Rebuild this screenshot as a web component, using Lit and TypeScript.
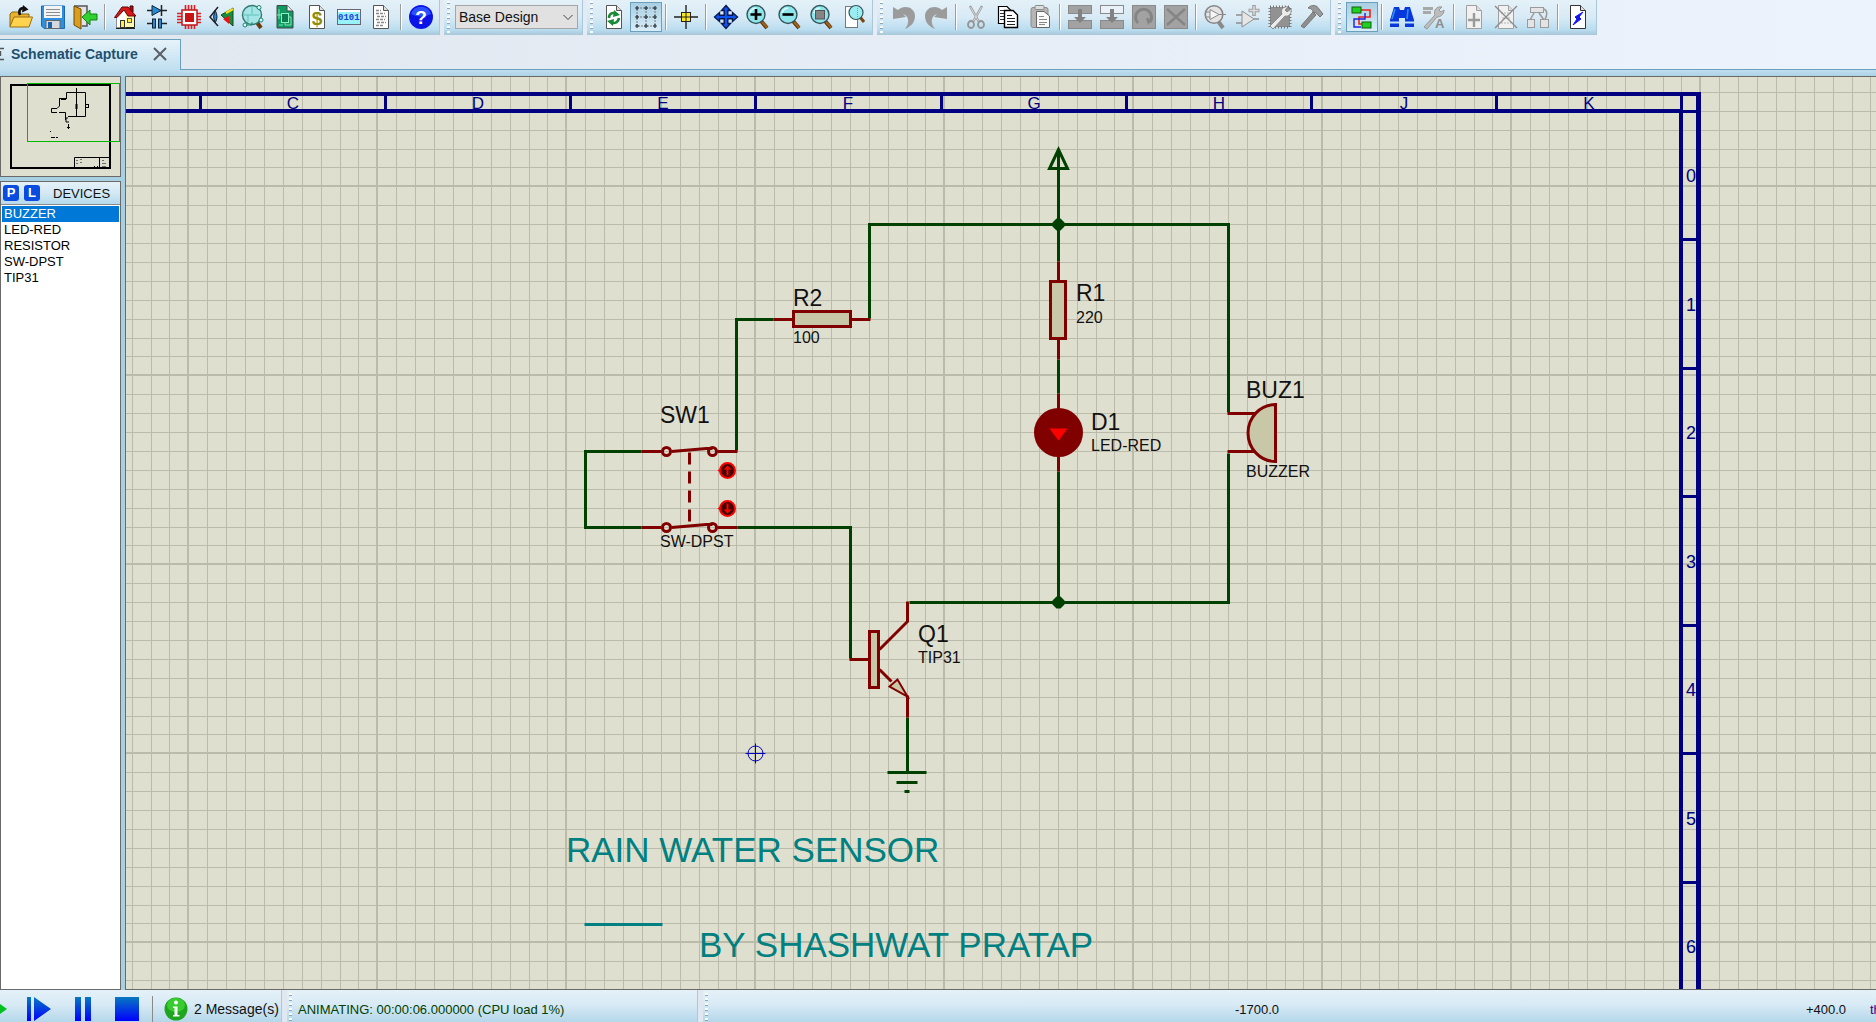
import { LitElement, html, svg, css, nothing, SVGTemplateResult, TemplateResult } from "lit";
import { customElement, property, state } from "lit/decorators.js";
import { classMap } from "lit/directives/class-map.js";

type Icon = SVGTemplateResult;

const lens = (inner: Icon) => svg`
  <path d="M15 16 L21 23" stroke="#5a3208" stroke-width="4"/>
  <path d="M16 17 L21 22.5" stroke="#a8641c" stroke-width="2"/>
  <circle cx="10" cy="9.5" r="9" fill="#8fe6ea" stroke="#35545c" stroke-width="1.4"/>
  <path d="M4 8 A7 7 0 0 1 10 3" fill="none" stroke="#e2ffff" stroke-width="1.4"/>
  ${inner}`;

const page = (inner: Icon, fill = "#fff", stroke = "#555") => svg`
  <path d="M4.5 0.5 H14.5 L19.5 5.5 V23.5 H4.5 Z" fill=${fill} stroke=${stroke}/>
  <path d="M14.5 0.5 V5.5 H19.5" fill="#ddd" stroke=${stroke}/>
  ${inner}`;

const grayBlock = (inner: Icon) => svg`
  <rect x="0.5" y="0.5" width="23" height="23" fill="#a2a2a2" stroke="#8a8a8a"/>${inner}`;

const ICONS: Record<string, Icon> = {
  open: svg`
    <path d="M1 21 V9 L3 7 H9 L11 9 H20 V13" fill="#e9b22c" stroke="#8d6410"/>
    <path d="M0.8 22 L5 12 H23.5 L20 22 Z" fill="#ffd34e" stroke="#9a6d12" stroke-linejoin="round"/>
    <path d="M11 10 C9 5 12 2 16 3.500" fill="none" stroke="#111" stroke-width="2.6"/>
    <path d="M14 0 L19.500 4.500 L13 7.500 Z" fill="#111"/>`,
  save: svg`
    <path d="M0.5 1 H23.5 V23.500 H3 L0.500 21 Z" fill="#2c8fe0" stroke="#1a68b4"/>
    <rect x="3" y="1" width="18" height="12" fill="#f4f4f4"/>
    <path d="M5 4.500 H19 M5 7.500 H19 M5 10.500 H19" stroke="#8d8d8d"/>
    <rect x="5" y="15.500" width="14" height="8" fill="#d5d8dc" stroke="#666"/>
    <rect x="7" y="17" width="4" height="6" fill="#1c63ae"/>`,
  exit: svg`
    <path d="M1 1 H14 V21 H9" fill="#e0e3e6" stroke="#555" stroke-width="1.500"/>
    <path d="M1 1 L8 4 V24 L1 20 Z" fill="#dc9c1c" stroke="#6d4a08"/>
    <path d="M24 9 V15 H17 V20 L9 12 L17 5 V9 Z" fill="#2fd02f" stroke="#128312"/>`,
  home: svg`
    <path d="M3.500 11 V22.500 H21.500 V10 L15 3 Z" fill="#fff7b0" stroke="#222"/>
    <path d="M3.500 12 V22.500 H12.500 V4 Z" fill="#fff"/>
    <path d="M17 1 H20 V7 H17 Z" fill="#b01010" stroke="#400"/>
    <path d="M1.500 12.500 L9 2 H15 L23 11 H15 L11 5 L4 12.500 Z" fill="#d81818" stroke="#5c0808"/>
    <rect x="7.500" y="15.500" width="4" height="7" fill="#ffef3e" stroke="#333"/>
    <rect x="14.500" y="13.500" width="4" height="4" fill="#ffef3e" stroke="#555"/>
    <path d="M3 23.500 H22" stroke="#222"/>`,
  diode: svg`
    <path d="M2 5.500 H22" stroke="#222" stroke-width="1.500"/>
    <path d="M7 0.500 V10.500 L16 5.500 Z" fill="#258ad6" stroke="#123"/>
    <path d="M16.500 0 V11" stroke="#222" stroke-width="1.500"/>
    <path d="M2 18.500 H7 M17 18.500 H22" stroke="#222" stroke-width="1.500"/>
    <rect x="7.500" y="14" width="3" height="9" fill="#258ad6" stroke="#123"/>
    <rect x="13.500" y="14" width="3" height="9" fill="#258ad6" stroke="#123"/>`,
  chip: svg`
    <path d="M8.500 0 V24 M11.500 0 V24 M14.500 0 V24 M17.500 0 V24 M0 8.500 H24 M0 11.500 H24 M0 14.500 H24 M0 17.500 H24" stroke="#e02020" stroke-width="1.600"/>
    <rect x="5" y="5" width="15" height="15" fill="#fff" stroke="#c01818" stroke-width="1.500"/>
    <rect x="8" y="8" width="9" height="9" fill="#c81414"/>`,
  view: svg`
    <path d="M9 2 L1 12 L9 21" fill="none" stroke="#222" stroke-width="1.500"/>
    <path d="M6 5 Q10 12 6 18 Q3 12 6 5 Z" fill="#2a88d8" stroke="#123"/>
    <path d="M12 10 L24 3 V21 Z" fill="#188c3c" stroke="#0a4d20"/>
    <path d="M14 14 L20 11 V19 Z" fill="#f01010"/>
    <path d="M17 8 L24 4" stroke="#f5e020" stroke-width="2.500"/>`,
  explore: svg`
    <path d="M15 16 L20 23" stroke="#6b3d0c" stroke-width="4"/>
    <circle cx="11" cy="10" r="9.500" fill="#a4e6e8" stroke="#2f7a70" stroke-width="1.400"/>
    <path d="M3 10 H18 M11 2 V9 M7 10 V17" stroke="#62bdb4" fill="none"/>
    <circle cx="18" cy="2.500" r="2" fill="#dff" stroke="#17856a"/>
    <circle cx="4" cy="20" r="2" fill="#dff" stroke="#17856a"/>
    <circle cx="20" cy="15" r="2" fill="#dff" stroke="#17856a"/>
    <path d="M5 20 H11 V17" stroke="#17856a" fill="none"/>`,
  pcb: svg`
    <path d="M4 0.500 H14 L20 6 V23 H4 Z" fill="#0f9a63" stroke="#444"/>
    <path d="M14 0.500 V6 H20" fill="#eee" stroke="#444"/>
    <rect x="8.500" y="8.500" width="7" height="9" fill="#0c7d50" stroke="#8ff0c0"/>
    <path d="M4 10 H8 M15 12 H18 V20 H12 V17 M6 4 V14 M6 20 H10" stroke="#7be8b4" fill="none"/>`,
  bom: page(svg`<text x="12" y="20" text-anchor="middle" font-size="19" font-weight="700" fill="#8c8c10">$</text>`),
  sim: svg`
    <rect x="0.500" y="4.500" width="23" height="15" fill="#98f2fa" stroke="#667"/>
    <rect x="1" y="5" width="22" height="2" fill="#fff"/>
    <text x="1" y="15" font-size="9" font-weight="700" fill="#2040e0" font-family="Liberation Mono, monospace">0101</text>`,
  doc: page(svg`<path d="M7 5.500 H12 M7 8.500 H16 M8 11.500 H17 M7 14.500 H16 M8 17.500 H17 M7 20.500 H15" stroke="#8a8a8a" stroke-width="1.400" stroke-dasharray="3 1"/>`),
  help: svg`
    <circle cx="12" cy="12" r="12" fill="#0a14e6"/>
    <path d="M2 9 A10.500 10.500 0 0 1 22 9 Q12 14 2 9" fill="#2a50ff"/>
    <text x="12" y="19" text-anchor="middle" font-size="19" font-weight="700" fill="#fff">?</text>`,
  refresh: page(svg`
    <path d="M7 13 C7 8 11 7 14 9 M17 13 C16 18 12 19 9 17" fill="none" stroke="#188a38" stroke-width="2.600"/>
    <path d="M12 5 L18 10 L11 12 Z M12 14 L5 16 L11 21 Z" fill="#188a38"/>`),
  grid: svg`
    <path d="M3 3 H21 V21 H3 Z M12 3 V21 M3 12 H21" fill="none" stroke="#707b84" stroke-dasharray="2 1"/>
    ${[3, 12, 21].map((x) => [3, 12, 21].map((y) => svg`<path d="M${x - 2} ${y} h4 M${x} ${y - 2} v4" stroke="#2c3338" stroke-width="1.200"/>`))}`,
  origin: svg`
    <path d="M0 12 H24 M12 0 V24" stroke="#222" stroke-width="1.400"/>
    <rect x="7.500" y="7.500" width="9" height="9" fill="#ffe81c" stroke="#222"/>
    <path d="M7 12 H17 M12 7 V17" stroke="#222"/>`,
  pan: svg`
    <path d="M12 0.500 L16.500 5.500 H13.800 V10.200 H18.500 V7.500 L23.500 12 L18.500 16.500 V13.800 H13.800 V18.500 H16.500 L12 23.500 L7.500 18.500 H10.200 V13.800 H5.500 V16.500 L0.500 12 L5.500 7.500 V10.200 H10.200 V5.500 H7.500 Z" fill="#1054f0" stroke="#06184e" stroke-width="1.400"/>`,
  zoomIn: lens(svg`<path d="M4.500 9.500 H15.500 M10 4 V15" stroke="#000" stroke-width="2.600"/>`),
  zoomOut: lens(svg`<path d="M4.500 9.500 H15.500" stroke="#000" stroke-width="2.600"/>`),
  zoomAll: lens(svg`<rect x="5.500" y="5.500" width="9" height="8.500" fill="#858585" stroke="#555"/>`),
  zoomArea: svg`
    <rect x="3.500" y="1.500" width="12" height="21" fill="#fff" stroke="#000" stroke-dasharray="1 1"/>
    <path d="M18 12 L22 17" stroke="#7a4510" stroke-width="3"/>
    <circle cx="14" cy="7.500" r="7" fill="#9aeef2" stroke="#35545c" stroke-width="1.200"/>
    <path d="M15.500 3 V13" stroke="#5ab" stroke-dasharray="1 1"/>`,
  undo: svg`<path d="M1 2 L6 5 C12 -1 23 2 23 11 C23 18 18 22 13 24 C18 18 17 11 11 9 L14 12 L1 14 Z" fill="#9b9b9b"/>`,
  redo: svg`<path d="M23 2 L18 5 C12 -1 1 2 1 11 C1 18 6 22 11 24 C6 18 7 11 13 9 L10 12 L23 14 Z" fill="#9b9b9b"/>`,
  cut: svg`
    <path d="M6 1 L15 17 M18 1 L9 17" stroke="#9a9a9a" stroke-width="2.400"/>
    <path d="M6.500 2 L15 17 M17.500 2 L9 17" stroke="#d8d8d8"/>
    <ellipse cx="7" cy="19.500" rx="3" ry="3.500" fill="none" stroke="#949494" stroke-width="1.800"/>
    <ellipse cx="17" cy="19.500" rx="3" ry="3.500" fill="none" stroke="#949494" stroke-width="1.800"/>`,
  copy: svg`
    <path d="M2.500 1.500 H11 L14.500 5 V18.500 H2.500 Z" fill="#fff" stroke="#000" stroke-width="1.200"/>
    <path d="M4 5.500 H10 M4 8.500 H12 M4 11.500 H9 M4 14.500 H9" stroke="#234" />
    <path d="M8.500 5.500 H17 L21.500 10 V22.500 H8.500 Z" fill="#fff" stroke="#000" stroke-width="1.400"/>
    <path d="M11 10.500 H16 M11 13.500 H19 M11 16.500 H19 M11 19.500 H19" stroke="#222" stroke-width="1.200"/>`,
  paste: svg`
    <rect x="3" y="2.500" width="17" height="20" rx="2" fill="#b5b5b5" stroke="#8c8c8c"/>
    <rect x="7" y="0.500" width="9" height="4" rx="1" fill="#ddd" stroke="#8c8c8c"/>
    <path d="M8.500 6.500 H16 L21.500 11 V22.500 H8.500 Z" fill="#fafafa" stroke="#666"/>
    <path d="M11 11.500 H16 M11 14.500 H19 M11 17.500 H19 M11 19.500 H17" stroke="#888"/>`,
  blockCopy: svg`
    <rect x="0.500" y="0.500" width="23" height="8" fill="#a2a2a2" stroke="#8a8a8a"/>
    <rect x="0.500" y="15.500" width="23" height="8" fill="#a2a2a2" stroke="#8a8a8a"/>
    <path d="M10 4 H14 V12 H18 L12 18 L6 12 H10 Z" fill="#828282"/>`,
  blockMove: svg`
    <rect x="0.500" y="0.500" width="23" height="8" fill="#e9f2f8" stroke="#8a8a8a"/>
    <rect x="0.500" y="15.500" width="23" height="8" fill="#a2a2a2" stroke="#8a8a8a"/>
    <path d="M10 4 H14 V12 H18 L12 18 L6 12 H10 Z" fill="#828282"/>`,
  blockRotate: grayBlock(svg`<path d="M6 18 A8 8 0 1 1 18 17" fill="none" stroke="#858585" stroke-width="3"/><path d="M14 13 L21 14 L16 20 Z" fill="#858585"/>`),
  blockDelete: grayBlock(svg`<path d="M3 4 L21 20 M21 4 L3 20" stroke="#858585" stroke-width="2.400"/>`),
  pick: svg`
    <path d="M14 16 L19 23" stroke="#8a8a8a" stroke-width="4"/>
    <circle cx="10" cy="9.500" r="8.800" fill="#e4e4e4" stroke="#858585" stroke-width="1.600"/>
    <path d="M6 4.500 V14.500 L15 9.500 Z" fill="#f6f6f6" stroke="#8a8a8a"/>
    <path d="M1 7 H6 M1 12 H6 M15 9.500 H22" stroke="#8a8a8a"/>`,
  make: svg`
    <path d="M6 6 V22 L18 14 Z" fill="#e6e6e6" stroke="#8f8f8f"/>
    <path d="M0 10 H6 M0 18 H6 M18 14 H23" stroke="#8f8f8f" stroke-width="1.400"/>
    <path d="M18 0 V11 M12.500 5.500 H23.500" stroke="#a0a0a0" stroke-width="3.600"/>
    <path d="M18 1 V10 M13.500 5.500 H22.500" stroke="#dcdcdc" stroke-width="1.400"/>`,
  pack: svg`
    <rect x="2" y="2" width="20" height="20" fill="#8c8c8c" stroke="#777" stroke-width="3" stroke-dasharray="1 2"/>
    <rect x="3" y="3" width="18" height="18" fill="#929292"/>
    <path d="M2 21 L14 9 C12 4 16 1 20 2 L17 5 L19 7 L23 4 C24 9 20 12 17 11 L5 24 Z" fill="#ececec" stroke="#8a8a8a"/>`,
  hammer: svg`
    <path d="M1 21 L13 7 L16 10 L4 23 Z" fill="#8e8e8e" stroke="#777"/>
    <path d="M8 3 C12 -1 17 0 19 4 L23 9 L20 12 L16 8 L13 7 C13 5 11 3 8 3 Z" fill="#999" stroke="#777"/>`,
  wire: svg`
    <path d="M10 5 H20 V12 H9 V19 H13" fill="none" stroke="#f02020" stroke-width="1.600"/>
    <path d="M15 8 V14 H4 V22 H11" fill="none" stroke="#2020e0" stroke-width="1.400"/>
    <rect x="2" y="2" width="9" height="6" fill="#20d020" stroke="#0b600b"/>
    <rect x="12" y="17" width="9" height="6" fill="#20d020" stroke="#0b600b"/>`,
  find: svg`
    <path d="M4 2 H9 L10 5 H14 L15 2 H20 L24 15 V22 H15 V13 H9 V22 H0 V15 Z" fill="#0838dc"/>
    <path d="M0 17.500 H9 M15 17.500 H24" stroke="#bfe4f4" stroke-width="2"/>
    <path d="M5 4 L2 14 M18 4 L17 14" stroke="#2890f0" stroke-width="1.600"/>`,
  props: svg`
    <path d="M1 3.500 H11 M1 7.500 H9" stroke="#a8a8a8" stroke-width="3"/>
    <path d="M2 22 L13 10 C11 5 15 1 20 2 L17 5 L19 7 L22 5 C22 10 18 12 15 12 L5 24 Z" fill="#bdbdbd" stroke="#999"/>
    <text x="13" y="23" font-size="13" font-weight="700" fill="#8c8c8c">A</text>`,
  newSheet: page(svg`<path d="M12 8 V22 M6 15 H18" stroke="#9a9a9a" stroke-width="2.400"/>`, "#f1f1f1", "#a0a0a0"),
  delSheet: page(svg`<path d="M7 8 H17 M8 13 H16 M7 18 H17" stroke="#b5b5b5" stroke-dasharray="2 1"/><path d="M1 1 L23 23 M23 1 L1 23" stroke="#8c8c8c" stroke-width="1.400"/>`, "#f1f1f1", "#a0a0a0"),
  tree: svg`
    <path d="M8 8 L4 15 M13 8 L18 15 M18 4 C22 6 21 11 19 14" fill="none" stroke="#999" stroke-width="1.500"/>
    <rect x="4.500" y="2.500" width="13" height="5" fill="#e4e4e4" stroke="#9a9a9a"/>
    <rect x="1.500" y="14.500" width="7" height="8" fill="#e4e4e4" stroke="#9a9a9a"/>
    <rect x="14.500" y="14.500" width="8" height="8" fill="#e4e4e4" stroke="#9a9a9a"/>`,
  erc: page(svg`<path d="M17 7 L9 12 L11 14 L7 20 L15 14 L13 12 Z" fill="#1414f0" stroke="#1414f0"/>`, "#fff", "#333"),
};

interface Tool { icon: string; label: string; pressed?: boolean }
const t = (icon: string, label: string, pressed = false): Tool => ({ icon, label, pressed });

const FILE_TOOLS: Tool[][] = [
  [t("open", "Open Project"), t("save", "Save Project"), t("exit", "Close Project")],
  [t("home", "Home Page"), t("diode", "Schematic Capture"), t("chip", "PCB Layout"), t("view", "3D Visualizer"), t("explore", "Gerber Viewer"), t("pcb", "Design Explorer"), t("bom", "Bill of Materials"), t("sim", "Source Code"), t("doc", "Project Notes")],
  [t("help", "Help")],
];
const VIEW_TOOLS: Tool[][] = [
  [t("refresh", "Redraw Display"), t("grid", "Toggle Grid", true)],
  [t("origin", "Toggle False Origin")],
  [t("pan", "Center At Cursor"), t("zoomIn", "Zoom In"), t("zoomOut", "Zoom Out"), t("zoomAll", "Zoom To View Entire Sheet"), t("zoomArea", "Zoom To Area")],
];
const EDIT_TOOLS: Tool[][] = [
  [t("undo", "Undo"), t("redo", "Redo")],
  [t("cut", "Cut"), t("copy", "Copy"), t("paste", "Paste")],
  [t("blockCopy", "Block Copy"), t("blockMove", "Block Move"), t("blockRotate", "Block Rotate"), t("blockDelete", "Block Delete")],
  [t("pick", "Pick Parts"), t("make", "Make Device"), t("pack", "Packaging Tool"), t("hammer", "Decompose")],
];
const DESIGN_TOOLS: Tool[][] = [
  [t("wire", "Wire Autorouter", true)],
  [t("find", "Search and Tag"), t("props", "Property Assignment Tool")],
  [t("newSheet", "New Sheet"), t("delSheet", "Remove Sheet"), t("tree", "Exit To Parent Sheet")],
  [t("erc", "Electrical Rules Check")],
];

@customElement("tool-strip")
export class ToolStrip extends LitElement {
  @property({ attribute: false }) groups: Tool[][] = [];
  @property({ type: Boolean }) grip = false;

  static styles = css`
    :host { display: flex; }
    .strip {
      display: flex; align-items: center; box-sizing: border-box; height: 35px;
      padding: 0 2px 1px 5px; border-right: 1px solid #a9c8dc;
      background: linear-gradient(#e4f1f8, #d8eaf5 50%, #b9ddf0 85%, #a8c6d8);
    }
    .strip.gripped { padding-left: 3px; }
    .grip { width: 3px; height: 32px; margin-right: 5px; background: repeating-linear-gradient(#f8fcff 0 2px, #8fa7b6 2px 3px, transparent 3px 5px); }
    .sep { width: 1px; height: 26px; margin: 0 3px; background: #9c9c9c; border-right: 1px solid #fff; }
    .tool { width: 32px; height: 30px; padding: 0; border: 1px solid transparent; background: none; display: grid; place-items: center; box-sizing: border-box; }
    .tool.pressed { border-color: #6a9fbe; background: linear-gradient(#a9cfe2, #d8edf7); }
    .icon { display: block; overflow: visible; font-family: "Liberation Sans", Arial, sans-serif; }
  `;

  render() {
    return html`<div class=${classMap({ strip: true, gripped: this.grip })} role="toolbar">
      ${this.grip ? html`<span class="grip"></span>` : nothing}
      ${this.groups.map((g, i) => html`
        ${i ? html`<span class="sep"></span>` : nothing}
        ${g.map((tool) => html`<button class=${classMap({ tool: true, pressed: !!tool.pressed })} aria-label=${tool.label}>
          <svg class="icon" width="24" height="24" viewBox="0 0 24 24">${ICONS[tool.icon]}</svg>
        </button>`)}`)}
    </div>`;
  }
}

const COLUMN_TICKS = [199, 384, 569, 754, 940, 1125, 1310, 1495];
const COLUMN_NAMES = ["C", "D", "E", "F", "G", "H", "J", "K"];
const ROW_TICKS = [238, 367, 495, 624, 752, 881];
const ROW_BASELINES = [182, 311, 439, 568, 696, 825, 953];
const GRID_STEPS = [20, 39, 58, 77, 96, 115, 134, 153, 171];

interface Label { x: number; y: number; text: string; kind: string }
const LABELS: Label[] = [
  { x: 793, y: 306, text: "R2", kind: "ref" },
  { x: 793, y: 343, text: "100", kind: "val" },
  { x: 660, y: 423, text: "SW1", kind: "ref" },
  { x: 660, y: 547, text: "SW-DPST", kind: "val" },
  { x: 1076, y: 301, text: "R1", kind: "ref" },
  { x: 1076, y: 323, text: "220", kind: "val" },
  { x: 1091, y: 430, text: "D1", kind: "ref" },
  { x: 1091, y: 451, text: "LED-RED", kind: "val" },
  { x: 1246, y: 398, text: "BUZ1", kind: "ref" },
  { x: 1246, y: 477, text: "BUZZER", kind: "val" },
  { x: 918, y: 642, text: "Q1", kind: "ref" },
  { x: 918, y: 663, text: "TIP31", kind: "val" },
  { x: 566, y: 862, text: "RAIN WATER SENSOR", kind: "title" },
  { x: 699, y: 957, text: "BY SHASHWAT PRATAP", kind: "title" },
];

@customElement("schematic-sheet")
export class SchematicSheet extends LitElement {
  static styles = css`
    :host { display: flex; flex: 1; min-width: 0; min-height: 0; background: #dfdfcf; }
    .sheet { flex: 1; display: block; width: 100%; height: 100%; font-family: "Liberation Sans", Arial, sans-serif; }
    .ref { font-size: 23px; fill: #111; }
    .val { font-size: 16px; fill: #111; }
    .title { font-size: 35px; fill: #008080; }
    .column { font-size: 17px; fill: #000080; text-anchor: middle; }
    .row { font-size: 18px; fill: #000080; }
    .border { fill: #000080; }
    .wire { fill: none; stroke: #004000; stroke-width: 3; }
    .part { fill: none; stroke: #800000; stroke-width: 3; }
    .body { fill: #c8c8a8; stroke: #800000; stroke-width: 3; }
    .arrow { fill: #c8c8a8; stroke: #800000; stroke-width: 2; }
    .node { fill: #004000; }
  `;

  private toggle(y: number, dir: number) {
    return svg`
      <path d="M717 ${y} l4 -3 v6 z" fill="#f00"/>
      <circle cx="727" cy=${y} r="7.5" fill="#400000" stroke="#ff0000" stroke-width="2"/>
      <path d="M727 ${y + 5 * dir} V${y - 3 * dir}" stroke="#ff0000" stroke-width="2"/>
      <path d="M723 ${y - dir} L727 ${y - 5 * dir} L731 ${y - dir} Z" fill="#ff0000"/>`;
  }

  private pole(y: number) {
    return svg`
      <path class="part" d="M641 ${y} H661 M717 ${y} H737 M671 ${y} L706 ${y - 3} H712"/>
      <circle class="part" cx="666" cy=${y} r="4"/>
      <circle class="part" cx="712" cy=${y} r="4"/>`;
  }

  render() {
    return html`<svg class="sheet" role="img" aria-label="Rain water sensor schematic">
      <defs>
        <pattern id="grid" x="187" y="185" width="189" height="189" patternUnits="userSpaceOnUse">
          <rect width="189" height="2" fill="#bbbbab"/>
          <rect width="2" height="189" fill="#bbbbab"/>
          ${GRID_STEPS.map((p) => svg`<rect x=${p} width="1" height="189" fill="#bbbbab"/><rect y=${p} width="189" height="1" fill="#bbbbab"/>`)}
        </pattern>
      </defs>
      <g transform="translate(-126 -77)">
        <rect x="126" y="77" width="100%" height="100%" fill="url(#grid)"/>
        <g class="border">
          <rect x="126" y="92" width="1575" height="4"/>
          <rect x="126" y="109" width="1556" height="4"/>
          <rect x="1680" y="110" width="16" height="3"/>
          <rect x="1680" y="92" width="3" height="20"/>
          <rect x="1679" y="109" width="4" height="100%"/>
          <rect x="1696" y="92" width="5" height="100%"/>
          ${COLUMN_TICKS.map((x) => svg`<rect x=${x} y="94" width="3" height="17"/>`)}
          ${ROW_TICKS.map((y) => svg`<rect x="1681" y=${y} width="17" height="3"/>`)}
        </g>
        ${COLUMN_NAMES.map((c, i) => svg`<text class="column" x=${COLUMN_TICKS[i] + 94} y="109">${c}</text>`)}
        ${ROW_BASELINES.map((y, i) => svg`<text class="row" x="1686" y=${y}>${i}</text>`)}
      </g>
      <g transform="translate(-125.5 -76.5)">
        <path class="wire" d="M773 319 H736 V450 M869 318 V224 H1228 V412 M1228 453 V602 H909
          M1058 151 V261 M1058 359 V393 M1058 471 V602 M641 451 H585 V527 H641 M737 527 H850 V658
          M907 717 V772 M887 772 H926 M896 782 H917 M904 791 H909"/>
        <path class="wire" stroke-linejoin="miter" d="M1058 149 L1049 168 H1067 Z"/>
        <path class="node" d="M1056 218 h4 l4 4 v4 l-4 4 h-4 l-4 -4 v-4 z M1056 596 h4 l4 4 v4 l-4 4 h-4 l-4 -4 v-4 z"/>
        <path class="part" d="M773 319 H793 M851 319 H870 M1058 261 V281 M1058 339 V359 M1058 393 V410 M1058 456 V471"/>
        <rect class="body" x="793" y="311" width="57" height="15"/>
        <rect class="body" x="1050" y="281" width="15" height="57"/>
        <circle cx="1058" cy="432" r="24.5" fill="#800000"/>
        <path d="M1049 428 H1067 L1058 440 Z" fill="#ff0000"/>
        <path class="part" d="M1227 413 H1255 M1227 451 H1255"/>
        <path class="body" d="M1275 404 A27 28 0 0 0 1275 461 Z"/>
        ${this.pole(451)}
        ${this.pole(527)}
        <path class="part" d="M689 452 V464 M689 471 V483 M689 490 V502 M689 509 V521"/>
        ${this.toggle(470, 1)}
        ${this.toggle(508, -1)}
        <path class="part" d="M849 659 H868 M907 601 V621 L879 649 M879 669 L891 681 M907 695 V717"/>
        <rect class="body" x="869" y="631" width="9" height="56"/>
        <path class="arrow" d="M897 679 L889 686 L907 696 Z"/>
        <path d="M745 753 H765 M755 743 V763" stroke="#0000c0"/>
        <circle cx="755" cy="753" r="7.500" fill="none" stroke="#0000c0"/>
        <path d="M584 924 H662" stroke="#008080" stroke-width="3"/>
      </g>
      <g transform="translate(-126 -77)">
        ${LABELS.map((l) => svg`<text class=${l.kind} x=${l.x} y=${l.y}>${l.text}</text>`)}
      </g>
    </svg>`;
  }
}

const DEVICES = ["BUZZER", "LED-RED", "RESISTOR", "SW-DPST", "TIP31"];

@customElement("device-panel")
export class DevicePanel extends LitElement {
  @state() private selected = "BUZZER";

  static styles = css`
    :host { display: flex; flex-direction: column; gap: 4px; width: 121px; flex: none; font: 13px "Liberation Sans", Arial, sans-serif; }
    .overview { height: 99px; border: 1px solid #6a6a6a; background: #dfdfcf; }
    .thumb { display: block; width: 100%; height: 100%; }
    .devices { flex: 1; display: flex; flex-direction: column; border: 1px solid #6a6a6a; background: #fff; }
    .head { display: flex; align-items: center; height: 23px; padding: 0 2px; gap: 5px; background: linear-gradient(#e4f1f8, #d3e9f5 50%, #b5d9ec); border-bottom: 1px solid #8b8b8b; box-sizing: border-box; }
    .key { width: 16px; height: 16px; padding: 0; border: 0; border-radius: 3px; background: #0a4be0; color: #fff; font: bold 13px/16px "Liberation Sans", Arial, sans-serif; }
    .name { flex: 1; margin: 0; padding-left: 8px; font-size: 13px; font-weight: 400; color: #111; white-space: nowrap; }
    .list { list-style: none; margin: 0; padding: 1px; }
    .item { display: block; width: 100%; height: 16px; padding: 0 2px; border: 0; background: none; text-align: left; font: 13px/16px "Liberation Sans", Arial, sans-serif; color: #000; }
    .item.on { background: #0078d7; color: #fff; }
  `;

  render() {
    return html`
      <div class="overview">
        <svg class="thumb" role="img" aria-label="Sheet overview">
          <rect x="10" y="8" width="99" height="83" fill="none" stroke="#000" stroke-width="2"/>
          <path d="M73.500 91 V80.500 H109 M98.500 80 V91" fill="none" stroke="#000"/>
          <path d="M76 83 V88 M80 82 V88 M102 83 V90 M93 89.500 H97 M104 86 V90" stroke="#000" stroke-dasharray="1 2"/>
          <path d="M75.500 11 V39 M65.500 21 V15.500 H84.500 V39.500 H67 M59 21.500 H66 M58.500 21 V29 L56 31.500 H50.500 V35.500 H56 M58 35.500 H64.500 V43 M67 41 H65 V45 H68 M67.500 47 V52 M66 50.500 H69" fill="none" stroke="#000"/>
          <path d="M60 22 H65 M75.500 27 V32" stroke="#000" stroke-width="2"/>
          <rect x="84.500" y="27.500" width="3" height="3" fill="#dfdfcf" stroke="#000"/>
          <path d="M49 54.500 H50 M50 60.500 H54 M55 60.500 H57" stroke="#000"/>
          <rect x="26.500" y="6.500" width="92" height="58" fill="none" stroke="#00b800"/>
        </svg>
      </div>
      <section class="devices">
        <header class="head">
          <button class="key" aria-label="Pick devices">P</button>
          <button class="key" aria-label="Manage libraries">L</button>
          <h2 class="name">DEVICES</h2>
        </header>
        <ul class="list">
          ${DEVICES.map((d) => html`<li><button class=${classMap({ item: true, on: d === this.selected })} @click=${() => (this.selected = d)}>${d}</button></li>`)}
        </ul>
      </section>`;
  }
}

@customElement("app-root")
export class AppRoot extends LitElement {
  static styles = css`
    :host { display: block; font: 13px "Liberation Sans", Arial, sans-serif; color: #111; }
    .app { display: flex; flex-direction: column; height: 100vh; overflow: hidden; background: linear-gradient(90deg, #e1e7ef, #edf3fc); }
    .tools { display: flex; flex: none; gap: 4px; height: 35px; }
    .variant { display: flex; align-items: center; box-sizing: border-box; width: 139px; height: 35px; padding: 0 0 1px 3px; border-right: 1px solid #a9c8dc; background: linear-gradient(#e4f1f8, #d8eaf5 50%, #b9ddf0 85%, #a8c6d8); }
    .grip { width: 3px; height: 32px; margin-right: 5px; background: repeating-linear-gradient(#f8fcff 0 2px, #8fa7b6 2px 3px, transparent 3px 5px); }
    .picker { position: relative; display: flex; }
    .select { appearance: none; box-sizing: border-box; width: 123px; height: 24px; padding: 0 3px; border: 1px solid #a6a6a6; border-radius: 0; background: #e1e1e1; font: 14px "Liberation Sans", Arial, sans-serif; color: #111; }
    .chevron { position: absolute; right: 5px; top: 9px; pointer-events: none; }
    .tabs { display: flex; flex: none; align-items: flex-end; height: 34px; border-bottom: 1px solid #6a9fbe; }
    .tab { display: flex; align-items: center; box-sizing: border-box; width: 181px; height: 31px; margin-bottom: -1px; padding-bottom: 2px; border: 1px solid #6a9fbe; border-width: 1px 1px 0 0; background: linear-gradient(#e6f3fa, #c0dff0); color: #1f4f70; font-weight: bold; font-size: 14px; }
    .tab-icon { flex: none; margin-right: 7px; }
    .tab-name { flex: 1; white-space: nowrap; }
    .close { width: 16px; height: 16px; margin-right: 12px; padding: 0; border: 0; background: none; display: grid; place-items: center; }
    .work { flex: 1; display: flex; gap: 4px; padding-top: 6px; background: linear-gradient(#c0dff0, #a9cfe2 7px); min-height: 0; }
    .pane { flex: 1; display: flex; min-width: 0; border: 1px solid #6a6a6a; border-right: 0; }
    .status { display: flex; flex: none; align-items: stretch; gap: 5px; height: 32px; background: #dfe8f0; }
    .cell { display: flex; align-items: center; box-sizing: border-box; padding-top: 6px; border-right: 1px solid #a9c8dc; background: linear-gradient(#e4f1f8, #d8eaf5 45%, #b4d7ea); white-space: nowrap; }
    .transport { width: 282px; font-size: 14px; }
    .run { width: 411px; color: #004000; }
    .coords { flex: 1; border-right: 0; }
    .cell .grip { height: 28px; margin: -4px 6px 0 2px; }
    .ctl { height: 24px; padding: 0; border: 0; background: none; display: block; }
    .play { width: 27px; }
    .step { width: 48px; }
    .pause { width: 40px; }
    .stop { width: 37px; }
    .bar { width: 1px; height: 26px; margin-right: 11px; background: #8a8a8a; }
    .info { flex: none; margin-right: 6px; }
    .glyph { display: block; }
    .x { flex: 1; text-align: right; }
    .y { width: 567px; text-align: right; }
    .unit { width: 30px; padding-left: 24px; box-sizing: border-box; overflow: hidden; color: #400080; }
  `;

  private statusBar(): TemplateResult {
    return html`<footer class="status">
      <div class="cell transport">
        <button class="ctl play" aria-label="Run the simulation"><svg class="glyph" width="7" height="24"><path d="M0 7 L7 12 L0 17 Z" fill="#00c020"/></svg></button>
        <button class="ctl step" aria-label="Advance one frame"><svg class="glyph" width="24" height="24"><path d="M0 0 H4 V24 H0 Z M7 0 L24 12 L7 24 Z" fill="url(#blue)"/></svg></button>
        <button class="ctl pause" aria-label="Pause"><svg class="glyph" width="16" height="24"><path d="M0 0 H6 V24 H0 Z M10 0 H16 V24 H10 Z" fill="url(#blue)"/></svg></button>
        <button class="ctl stop" aria-label="Stop"><svg class="glyph" width="24" height="24"><defs><linearGradient id="blue" x1="0" y1="0" x2="0" y2="1"><stop offset="0" stop-color="#0878c0"/><stop offset="1" stop-color="#0000ff"/></linearGradient></defs><path d="M0 0 H24 V24 H0 Z" fill="url(#blue)"/></svg></button>
        <span class="bar"></span>
        <svg class="info" width="24" height="24"><circle cx="12" cy="12" r="11.500" fill="#1fa51f"/><ellipse cx="12" cy="8" rx="9" ry="7" fill="#38cc30"/><circle cx="12" cy="5.500" r="2" fill="#fff"/><path d="M9 9.500 H13.500 V18 H15.500 V19.500 H9 V18 H10.500 V11 H9 Z" fill="#fff"/></svg>
        <span>2 Message(s)</span>
      </div>
      <div class="cell run"><span class="grip"></span><span>ANIMATING: 00:00:06.000000 (CPU load 1%)</span></div>
      <div class="cell coords"><span class="grip"></span><span class="x">-1700.0</span><span class="y">+400.0</span><span class="unit">th</span></div>
    </footer>`;
  }

  render() {
    return html`<div class="app">
      <header class="tools">
        <tool-strip .groups=${FILE_TOOLS}></tool-strip>
        <div class="variant">
          <span class="grip"></span>
          <span class="picker">
            <select class="select" aria-label="Design variant"><option>Base Design</option></select>
            <svg class="chevron" width="10" height="7"><path d="M0.500 1 L5 5.500 L9.500 1" fill="none" stroke="#444"/></svg>
          </span>
        </div>
        <tool-strip grip .groups=${VIEW_TOOLS}></tool-strip>
        <tool-strip grip .groups=${EDIT_TOOLS}></tool-strip>
        <tool-strip grip .groups=${DESIGN_TOOLS}></tool-strip>
      </header>
      <nav class="tabs">
        <div class="tab">
          <svg class="tab-icon" width="4" height="14"><path d="M0 1.500 H4 M0 12.500 H4 M0.500 4 V9" stroke="#555" stroke-width="1.400"/></svg>
          <span class="tab-name">Schematic Capture</span>
          <button class="close" aria-label="Close tab"><svg class="glyph" width="14" height="14"><path d="M1 1 L13 13 M13 1 L1 13" stroke="#5a5f66" stroke-width="2"/></svg></button>
        </div>
      </nav>
      <main class="work">
        <device-panel></device-panel>
        <div class="pane"><schematic-sheet></schematic-sheet></div>
      </main>
      ${this.statusBar()}
    </div>`;
  }
}
